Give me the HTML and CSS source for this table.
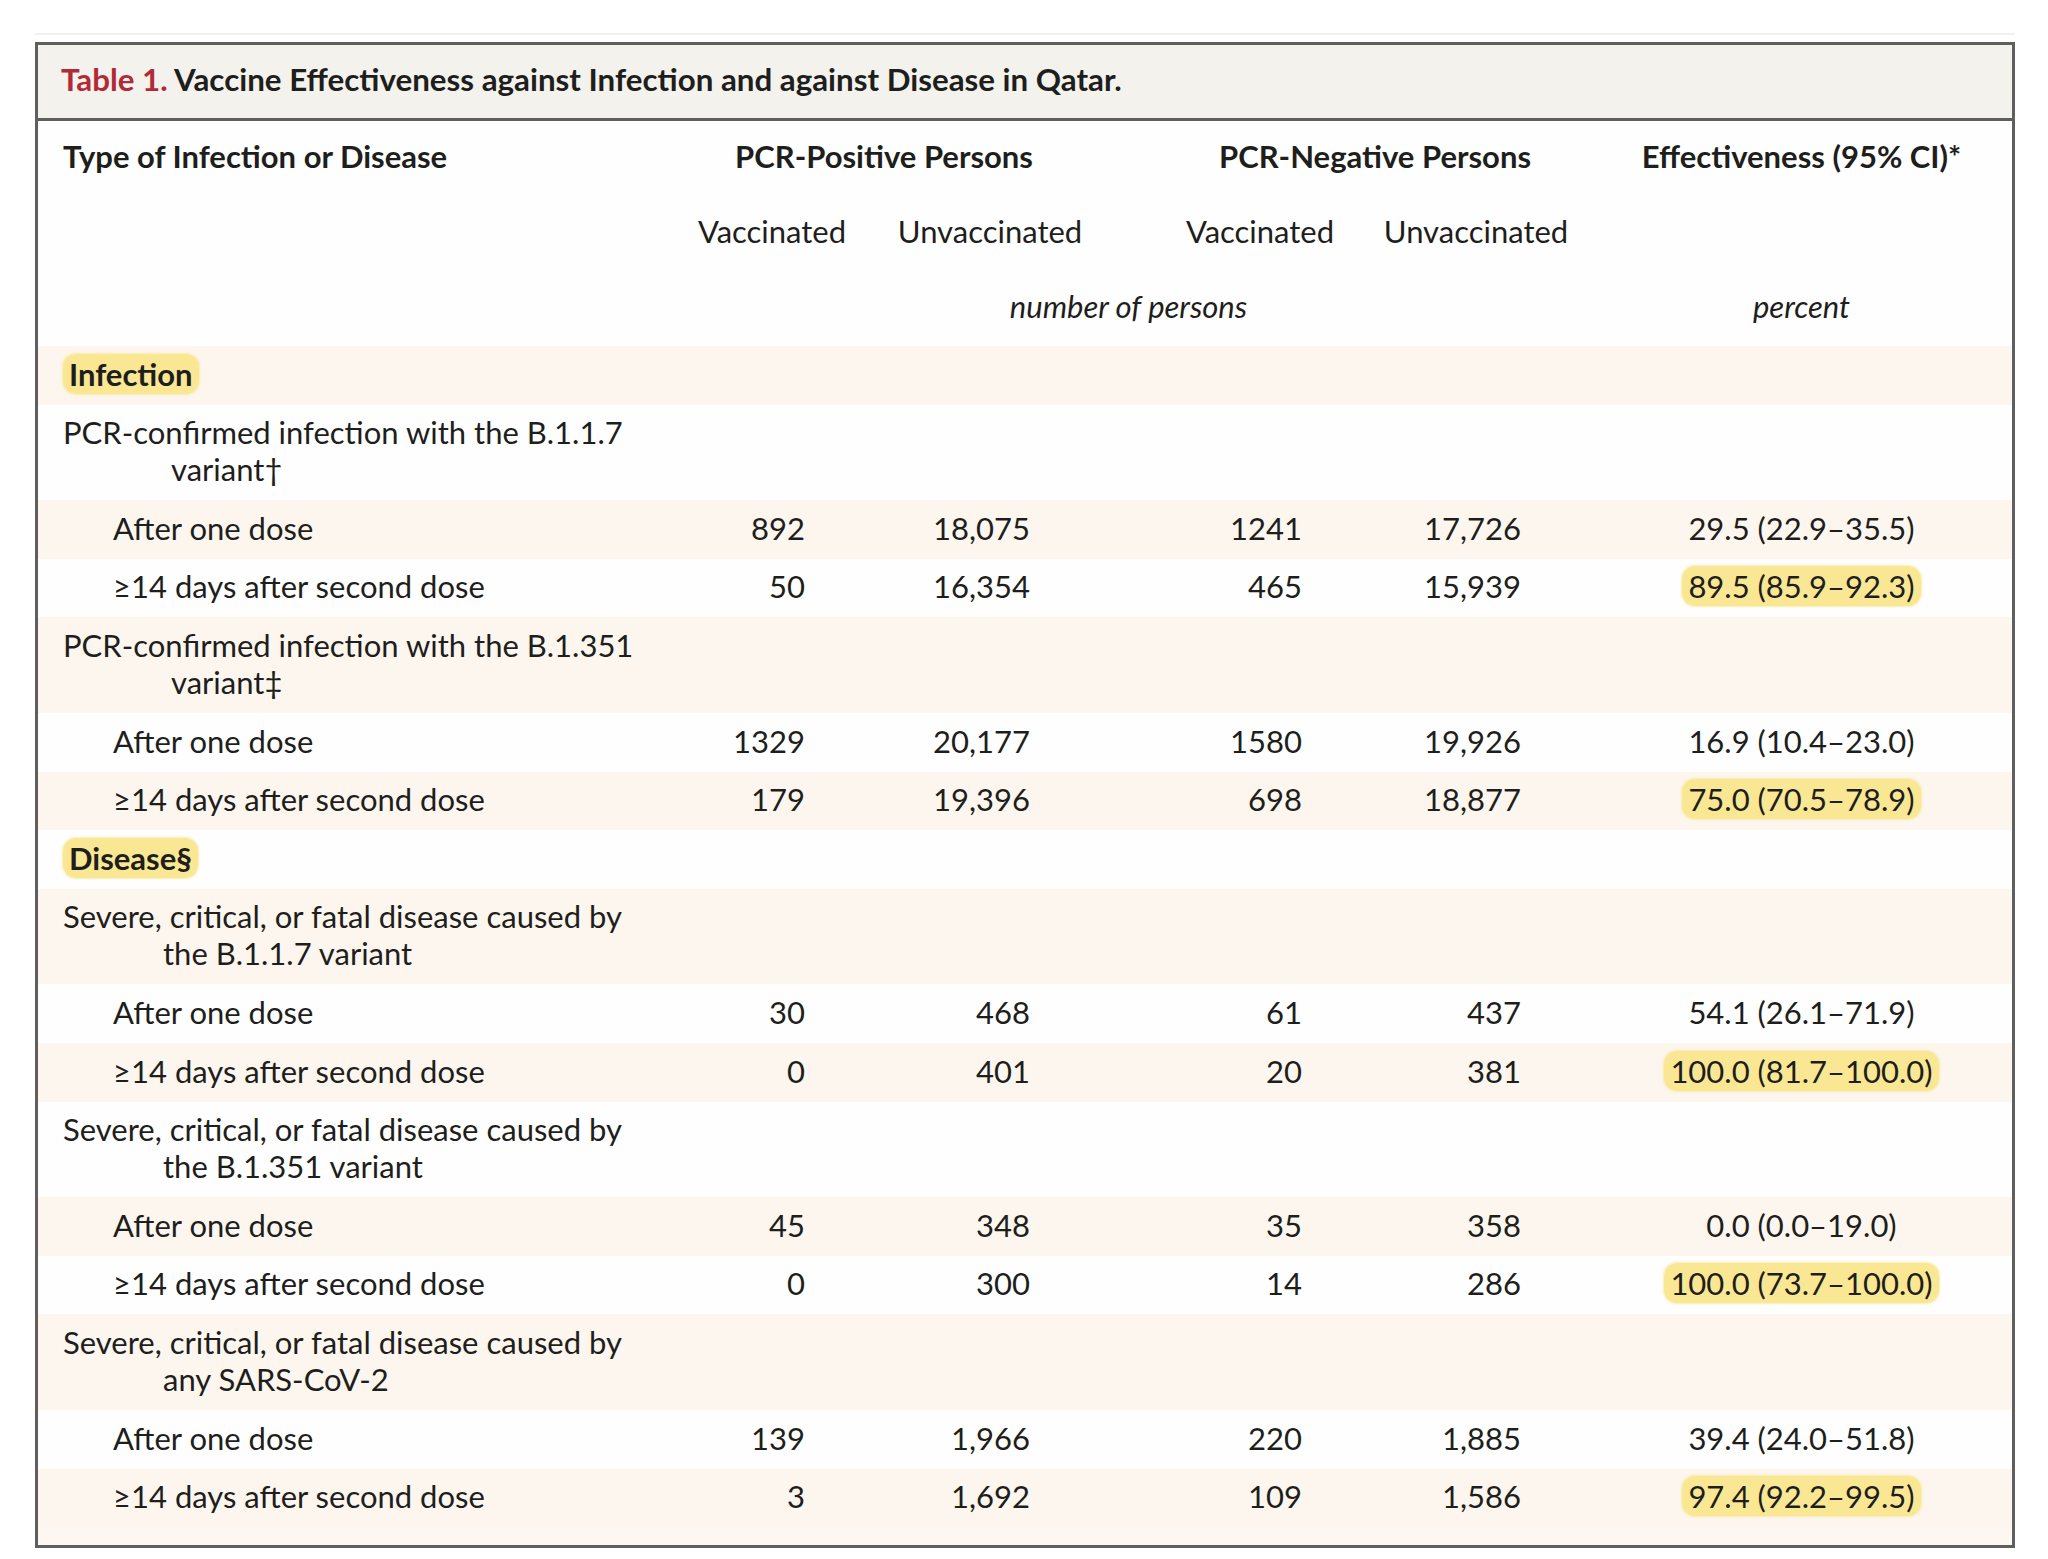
FILE: index.html
```html
<!DOCTYPE html>
<html lang="en">
<head>
<meta charset="utf-8">
<title>Table 1. Vaccine Effectiveness against Infection and against Disease in Qatar</title>
<link rel="stylesheet" href="styles.css">
</head>
<body>
<div class="sheet">
  <div class="tbl">
    <div class="caption"><span class="tnum">Table 1.</span> Vaccine Effectiveness against Infection and against Disease in Qatar.</div>

    <div class="thead">
      <div class="row hrow">
        <div class="cell lab hb">Type of Infection or Disease</div>
        <div class="cell hb ctr span2">PCR-Positive Persons</div>
        <div class="cell hb ctr span2 neg">PCR-Negative Persons</div>
        <div class="cell hb ctr">Effectiveness (95% CI)*</div>
      </div>
      <div class="row hrow">
        <div class="cell"></div>
        <div class="cell ctr">Vaccinated</div>
        <div class="cell ctr">Unvaccinated</div>
        <div class="cell ctr neg">Vaccinated</div>
        <div class="cell ctr">Unvaccinated</div>
        <div class="cell"></div>
      </div>
      <div class="row hrow">
        <div class="cell"></div>
        <div class="cell ctr it span4">number of persons</div>
        <div class="cell ctr it">percent</div>
      </div>
    </div>

    <div class="tbody">
      <div class="row brow">
        <div class="cell lab"><span class="pill hb">Infection</span></div>
      </div>
      <div class="row brow">
        <div class="cell lab"><span class="l1">PCR-confirmed infection with the B.1.1.7</span><span class="l2 var">variant†</span></div>
      </div>
      <div class="row brow">
        <div class="cell lab sub">After one dose</div>
        <div class="cell n n2">892</div><div class="cell n n3">18,075</div><div class="cell n n4">1241</div><div class="cell n n5">17,726</div>
        <div class="cell ctr">29.5 (22.9–35.5)</div>
      </div>
      <div class="row brow">
        <div class="cell lab sub">≥14 days after second dose</div>
        <div class="cell n n2">50</div><div class="cell n n3">16,354</div><div class="cell n n4">465</div><div class="cell n n5">15,939</div>
        <div class="cell ctr"><span class="pill">89.5 (85.9–92.3)</span></div>
      </div>
      <div class="row brow">
        <div class="cell lab"><span class="l1">PCR-confirmed infection with the B.1.351</span><span class="l2 var">variant‡</span></div>
      </div>
      <div class="row brow">
        <div class="cell lab sub">After one dose</div>
        <div class="cell n n2">1329</div><div class="cell n n3">20,177</div><div class="cell n n4">1580</div><div class="cell n n5">19,926</div>
        <div class="cell ctr">16.9 (10.4–23.0)</div>
      </div>
      <div class="row brow">
        <div class="cell lab sub">≥14 days after second dose</div>
        <div class="cell n n2">179</div><div class="cell n n3">19,396</div><div class="cell n n4">698</div><div class="cell n n5">18,877</div>
        <div class="cell ctr"><span class="pill">75.0 (70.5–78.9)</span></div>
      </div>
      <div class="row brow">
        <div class="cell lab"><span class="pill hb">Disease§</span></div>
      </div>
      <div class="row brow">
        <div class="cell lab"><span class="l1">Severe, critical, or fatal disease caused by</span><span class="l2">the B.1.1.7 variant</span></div>
      </div>
      <div class="row brow">
        <div class="cell lab sub">After one dose</div>
        <div class="cell n n2">30</div><div class="cell n n3">468</div><div class="cell n n4">61</div><div class="cell n n5">437</div>
        <div class="cell ctr">54.1 (26.1–71.9)</div>
      </div>
      <div class="row brow">
        <div class="cell lab sub">≥14 days after second dose</div>
        <div class="cell n n2">0</div><div class="cell n n3">401</div><div class="cell n n4">20</div><div class="cell n n5">381</div>
        <div class="cell ctr"><span class="pill">100.0 (81.7–100.0)</span></div>
      </div>
      <div class="row brow">
        <div class="cell lab"><span class="l1">Severe, critical, or fatal disease caused by</span><span class="l2">the B.1.351 variant</span></div>
      </div>
      <div class="row brow">
        <div class="cell lab sub">After one dose</div>
        <div class="cell n n2">45</div><div class="cell n n3">348</div><div class="cell n n4">35</div><div class="cell n n5">358</div>
        <div class="cell ctr">0.0 (0.0–19.0)</div>
      </div>
      <div class="row brow">
        <div class="cell lab sub">≥14 days after second dose</div>
        <div class="cell n n2">0</div><div class="cell n n3">300</div><div class="cell n n4">14</div><div class="cell n n5">286</div>
        <div class="cell ctr"><span class="pill">100.0 (73.7–100.0)</span></div>
      </div>
      <div class="row brow">
        <div class="cell lab"><span class="l1">Severe, critical, or fatal disease caused by</span><span class="l2">any SARS-CoV-2</span></div>
      </div>
      <div class="row brow">
        <div class="cell lab sub">After one dose</div>
        <div class="cell n n2">139</div><div class="cell n n3">1,966</div><div class="cell n n4">220</div><div class="cell n n5">1,885</div>
        <div class="cell ctr">39.4 (24.0–51.8)</div>
      </div>
      <div class="row brow">
        <div class="cell lab sub">≥14 days after second dose</div>
        <div class="cell n n2">3</div><div class="cell n n3">1,692</div><div class="cell n n4">109</div><div class="cell n n5">1,586</div>
        <div class="cell ctr"><span class="pill">97.4 (92.2–99.5)</span></div>
      </div>
    </div>
  </div>
</div>
</body>
</html>
```
FILE: styles.css
```css
html, body {
  margin: 0;
  padding: 0;
  background: #ffffff;
}

body {
  font-family: Lato, "Open Sans", sans-serif;
  font-size: 31px;
  color: #1e1e1c;
}

.sheet {
  margin: 33px 33px 0 35px;
  padding-top: 7px;
  border-top: 2px solid #f1f1f1;
}

.tbl {
  border: 3px solid #5f5f5f;
  background: #fcf7f0;
}

.caption {
  height: 68px;
  padding: 0 0 5px 23px;
  display: flex;
  align-items: center;
  background: #f3f2ed;
  border-bottom: 3px solid #5f5f5f;
  font-weight: 700;
  font-size: 31.3px;
  white-space: pre;
}

.tnum {
  color: #b32a37;
}

.thead {
  background: #fefefe;
}

.row {
  display: grid;
  grid-template-columns: 628px 212px 224px 259px 230px 1fr;
}

.hrow {
  box-sizing: border-box;
  height: 75px;
  padding-bottom: 5px;
  align-items: center;
}

.brow {
  padding: 9.6px 0 12px;
  line-height: 37px;
}

.tbody .brow:nth-child(odd) {
  background: #fcf6ef;
}

.tbody .brow:nth-child(even) {
  background: #fefefe;
}

.tbody {
  padding-bottom: 18px;
}

.cell {
  white-space: nowrap;
}

.lab {
  padding-left: 25px;
}

.lab.sub {
  padding-left: 75px;
}

.l1, .l2 {
  display: block;
}

.l2 {
  padding-left: 100px;
}

.l2.var {
  padding-left: 108px;
}

.hb {
  font-weight: 700;
}

.it {
  font-style: italic;
}

.ctr {
  text-align: center;
}

.span2 {
  grid-column: span 2;
}

.span4 {
  grid-column: span 4;
}

.neg {
  padding-left: 57px;
}

.n {
  text-align: right;
}

.n2 { padding-right: 73px; }
.n3 { padding-right: 72px; }
.n4 { padding-right: 59px; }
.n5 { padding-right: 70px; }

.pill {
  background: #fae793;
  border-radius: 13px;
  padding: 1px 6px;
  box-shadow: 0 0 2px 1px rgba(250, 231, 147, 0.7);
}
```
